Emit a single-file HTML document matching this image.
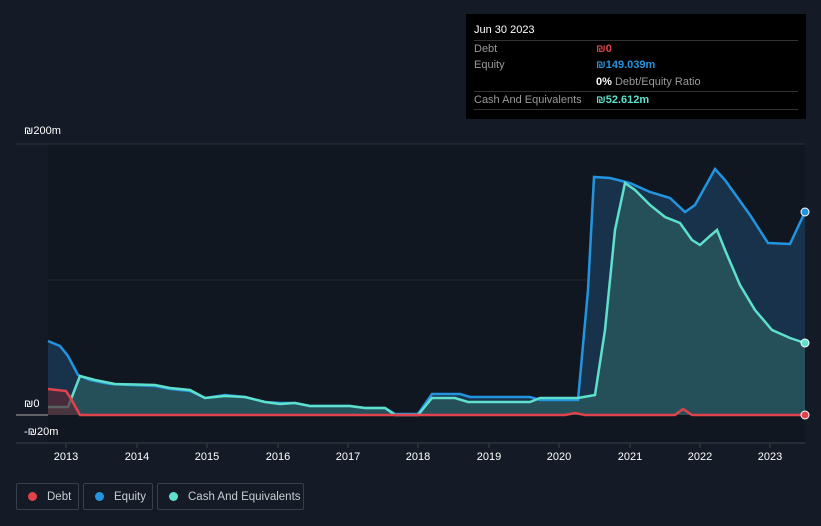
<!DOCTYPE html><html style="width:821px;height:526px;overflow:hidden"><head><style>
body{margin:0;width:821px;height:526px;background:#151b26;font-family:"Liberation Sans",sans-serif;overflow:hidden;position:relative}
.t{position:absolute;font-size:11px;color:#fff}
.tip{position:absolute;left:466px;top:14px;width:340px;height:105px;background:#000;color:#fff;font-size:11px}
.tip .r{position:absolute;left:8px;right:8px;border-top:1px solid #333;height:17px;line-height:17px;color:#999}
.lg{position:absolute;top:483px;height:27px;border:1px solid #3a404b;border-radius:2px;color:#c8ccd2;font-size:11.5px;line-height:26px;box-sizing:border-box;white-space:nowrap;overflow:hidden}
.lg i{display:inline-block;width:9px;height:9px;border-radius:50%;margin:0 10px 0 11px;vertical-align:-1px}
</style></head><body>
<svg width="821" height="526" style="position:absolute;left:0;top:0">
<rect x="48" y="144" width="757" height="299" fill="#111721"/>
<line x1="16" y1="144" x2="805" y2="144" stroke="#2a303a"/>
<line x1="48" y1="280" x2="805" y2="280" stroke="#232a35"/>
<line x1="16" y1="443" x2="805" y2="443" stroke="#3a404b"/>
<line x1="16" y1="415" x2="48" y2="415" stroke="#aaa"/>
<path d="M48,341 L60,346 68,356 78,375 90,380 110,384 130,385 155,386 170,389 190,391 205,398 225,395 245,397 265,402 280,403 295,403 310,406 350,406 365,408 385,408 395,414 418,414 432,394 460,394 470,397 530,397 540,400 578,400 588,290 594,177 610,178 630,183 650,192 670,198 685,212 695,205 715,169 725,180 750,215 768,243 790,244 805,212 L805,415 L48,415Z" fill="#1b3a57" fill-opacity="0.8"/>
<path d="M48,407 L68,407 80,376 95,380 115,384 155,385 170,388 190,390 205,398 225,396 245,397 265,402 280,404 295,403 310,406 350,406 365,408 385,408 395,415 418,415 432,398 455,398 468,402 530,402 540,398 578,398 595,395 605,330 615,230 625,183 635,190 650,205 665,217 680,223 692,240 700,245 710,236 717,230 725,250 740,285 755,310 772,330 790,338 805,343 L805,415 L48,415Z" fill="#2a5a5e" fill-opacity="0.75"/>
<path d="M48,341 L60,346 68,356 78,375 90,380 110,384 130,385 155,386 170,389 190,391 205,398 225,395 245,397 265,402 280,403 295,403 310,406 350,406 365,408 385,408 395,414 418,414 432,394 460,394 470,397 530,397 540,400 578,400 588,290 594,177 610,178 630,183 650,192 670,198 685,212 695,205 715,169 725,180 750,215 768,243 790,244 805,212" fill="none" stroke="#2394df" stroke-width="2.5"/>
<path d="M48,407 L68,407 80,376 95,380 115,384 155,385 170,388 190,390 205,398 225,396 245,397 265,402 280,404 295,403 310,406 350,406 365,408 385,408 395,415 418,415 432,398 455,398 468,402 530,402 540,398 578,398 595,395 605,330 615,230 625,183 635,190 650,205 665,217 680,223 692,240 700,245 710,236 717,230 725,250 740,285 755,310 772,330 790,338 805,343" fill="none" stroke="#5ee0cc" stroke-width="2.5"/>
<path d="M48,389 L48,415 80,415 70,397 66,391Z" fill="#5a2a33" fill-opacity="0.7"/>
<path d="M48,389 L66,391 70,397 80,415 565,415 575,413 585,415 675,415 683,409 692,415 805,415" fill="none" stroke="#e0434c" stroke-width="2.5"/>
<circle cx="805" cy="212" r="4" fill="#2394df" stroke="#fff" stroke-width="1"/>
<circle cx="805" cy="343" r="4" fill="#5ee0cc" stroke="#fff" stroke-width="1"/>
<circle cx="805" cy="415" r="4" fill="#e0434c" stroke="#fff" stroke-width="1"/>
<g stroke="#3a404b"><line x1="66" y1="443" x2="66" y2="448"/><line x1="137" y1="443" x2="137" y2="448"/><line x1="207" y1="443" x2="207" y2="448"/><line x1="278" y1="443" x2="278" y2="448"/><line x1="348" y1="443" x2="348" y2="448"/><line x1="418" y1="443" x2="418" y2="448"/><line x1="489" y1="443" x2="489" y2="448"/><line x1="559" y1="443" x2="559" y2="448"/><line x1="630" y1="443" x2="630" y2="448"/><line x1="700" y1="443" x2="700" y2="448"/><line x1="770" y1="443" x2="770" y2="448"/></g>
<g fill="#fff" font-size="11" text-anchor="middle" font-family="Liberation Sans"><text x="66" y="460">2013</text><text x="137" y="460">2014</text><text x="207" y="460">2015</text><text x="278" y="460">2016</text><text x="348" y="460">2017</text><text x="418" y="460">2018</text><text x="489" y="460">2019</text><text x="559" y="460">2020</text><text x="630" y="460">2021</text><text x="700" y="460">2022</text><text x="770" y="460">2023</text></g>
</svg>
<div class="t" style="left:24px;top:125px">₪200m</div>
<div class="t" style="left:24px;top:398px">₪0</div>
<div class="t" style="left:24px;top:426px">-₪20m</div>
<div class="tip">
<div style="position:absolute;left:8px;top:10px">Jun 30 2023</div>
<div class="r" style="top:26px">Debt<span style="position:absolute;left:122px;color:#e0434c;font-weight:bold">₪0</span></div>
<div class="r" style="top:43px;border:0">Equity<span style="position:absolute;left:122px;color:#2394df;font-weight:bold">₪149.039m</span></div>
<div class="r" style="top:60px;border:0"><span style="position:absolute;left:122px"><b style="color:#fff">0%</b> Debt/Equity Ratio</span></div>
<div class="r" style="top:77px">Cash And Equivalents<span style="position:absolute;left:122px;color:#5ee0cc;font-weight:bold">₪52.612m</span></div>
<div class="r" style="top:95px;height:0"></div>
</div>
<div class="lg" style="left:16px;width:63px"><i style="background:#e0434c"></i>Debt</div>
<div class="lg" style="left:83px;width:70px"><i style="background:#2394df"></i>Equity</div>
<div class="lg" style="left:157px;width:147px"><i style="background:#5ee0cc"></i>Cash And Equivalents</div>
</body></html>
